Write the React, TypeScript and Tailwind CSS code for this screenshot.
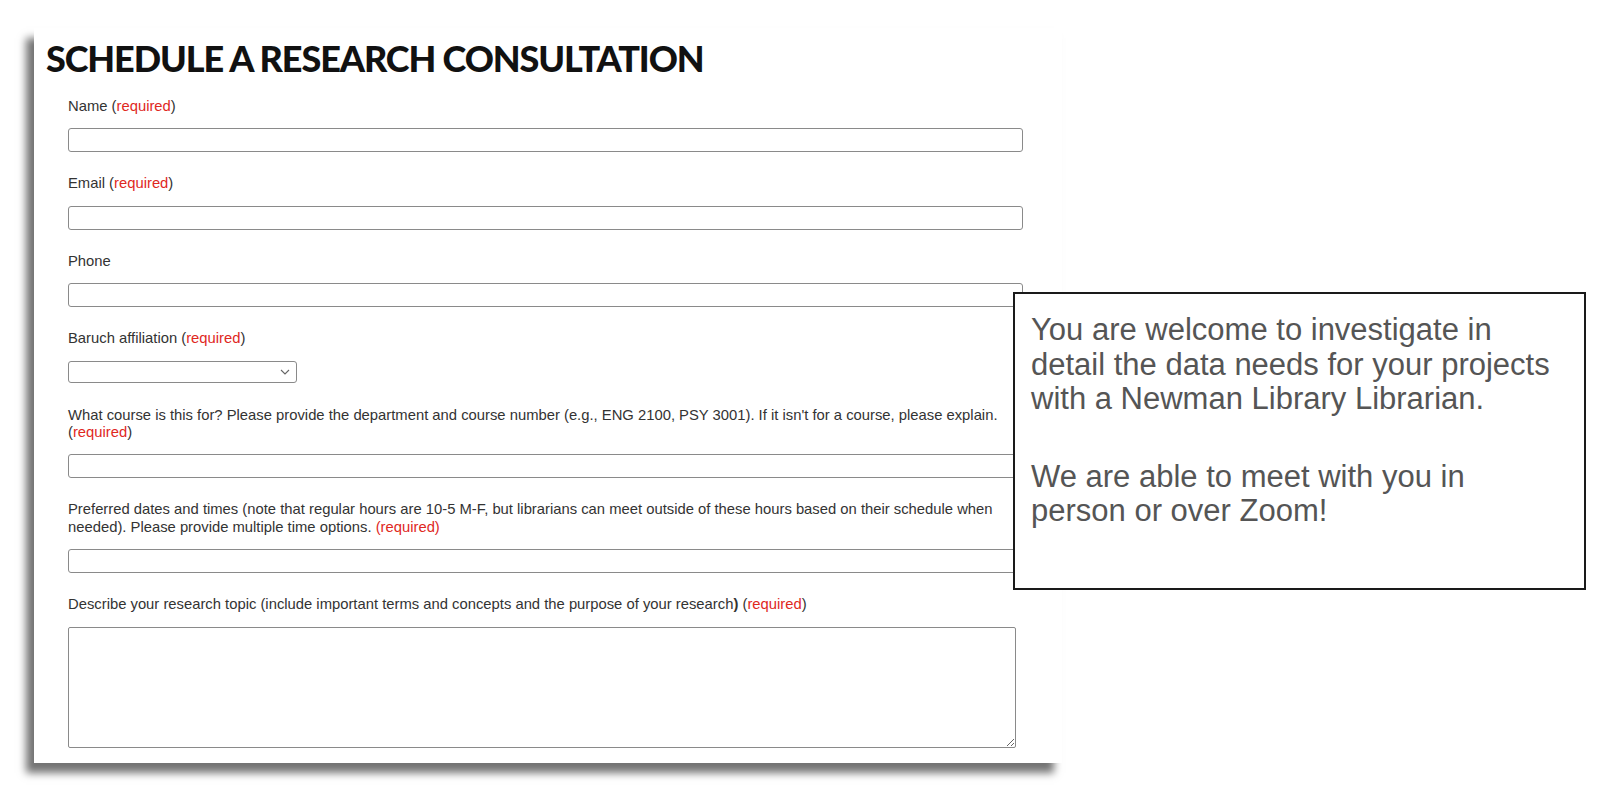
import React from "react";

function Req() {
  return <span className="text-[#e0281e]">required</span>;
}

function Field({ label, children }: { label: React.ReactNode; children: React.ReactNode }) {
  return (
    <div className="flex flex-col">
      <label className="mb-[13px] block text-[14.8px] leading-[17.4px] text-[#333]">{label}</label>
      {children}
    </div>
  );
}

const inputCls =
  "block h-[24px] w-[955px] rounded-[3px] border border-[#8a8a8a] bg-white";

export default function App() {
  return (
    <div className="relative h-[792px] w-[1606px] overflow-hidden bg-white font-['Liberation_Sans',Arial,sans-serif]">
      <section className="ml-[34px] mt-[28px] flex h-[735px] w-[1028px] flex-col bg-white pt-[12px] shadow-[-8px_10px_8px_rgba(0,0,0,0.55)]">
        <h1 className="pl-[12px] font-['Lato',sans-serif] text-[36px] font-black leading-[36px] tracking-[-1.1px] text-[#111]">
          SCHEDULE A RESEARCH CONSULTATION
        </h1>
        <form className="mt-[22px] flex flex-col gap-[23px] pl-[34px]">
          <Field label={<>Name (<Req />)</>}>
            <input className={inputCls} />
          </Field>
          <Field label={<>Email (<Req />)</>}>
            <input className={inputCls} />
          </Field>
          <Field label="Phone">
            <input className={inputCls} />
          </Field>
          <Field label={<>Baruch affiliation (<Req />)</>}>
            <div className="relative mb-[1px] w-[229px]">
              <select className="block h-[22px] w-[229px] appearance-none rounded-[3px] border border-[#8a8a8a] bg-white" />
              <svg
                className="pointer-events-none absolute right-[7px] top-[8px]"
                width="10"
                height="6"
                viewBox="0 0 10 6"
                fill="none"
              >
                <path d="M1 1l4 4 4-4" stroke="#666" strokeWidth="1.1" />
              </svg>
            </div>
          </Field>
          <Field
            label={
              <span className="block w-[975px]">
                What course is this for? Please provide the department and course number (e.g., ENG 2100, PSY 3001). If
                it isn't for a course, please explain. (<Req />)
              </span>
            }
          >
            <input className={inputCls} />
          </Field>
          <Field
            label={
              <span className="block w-[975px]">
                Preferred dates and times (note that regular hours are 10-5 M-F, but librarians can meet outside of these
                hours based on their schedule when needed). Please provide multiple time options.{" "}
                <span className="text-[#e0281e]">(required)</span>
              </span>
            }
          >
            <input className={inputCls} />
          </Field>
          <Field
            label={
              <>
                Describe your research topic (include important terms and concepts and the purpose of your research
                <b>)</b> (<Req />)
              </>
            }
          >
            <textarea className="block h-[121px] w-[948px] rounded-[2px] border border-[#8a8a8a] bg-white" />
          </Field>
        </form>
      </section>

      <div className="absolute left-[1013px] top-[292px] h-[298px] w-[573px] border-2 border-[#1a1a1a] bg-white pl-[16px] pt-[19px] text-[31px] leading-[34.5px] text-[#555]">
        <p>
          You are welcome to investigate in
          <br />
          detail the data needs for your projects
          <br />
          with a Newman Library Librarian.
        </p>
        <p className="mt-[43px]">
          We are able to meet with you in
          <br />
          person or over Zoom!
        </p>
      </div>
    </div>
  );
}
